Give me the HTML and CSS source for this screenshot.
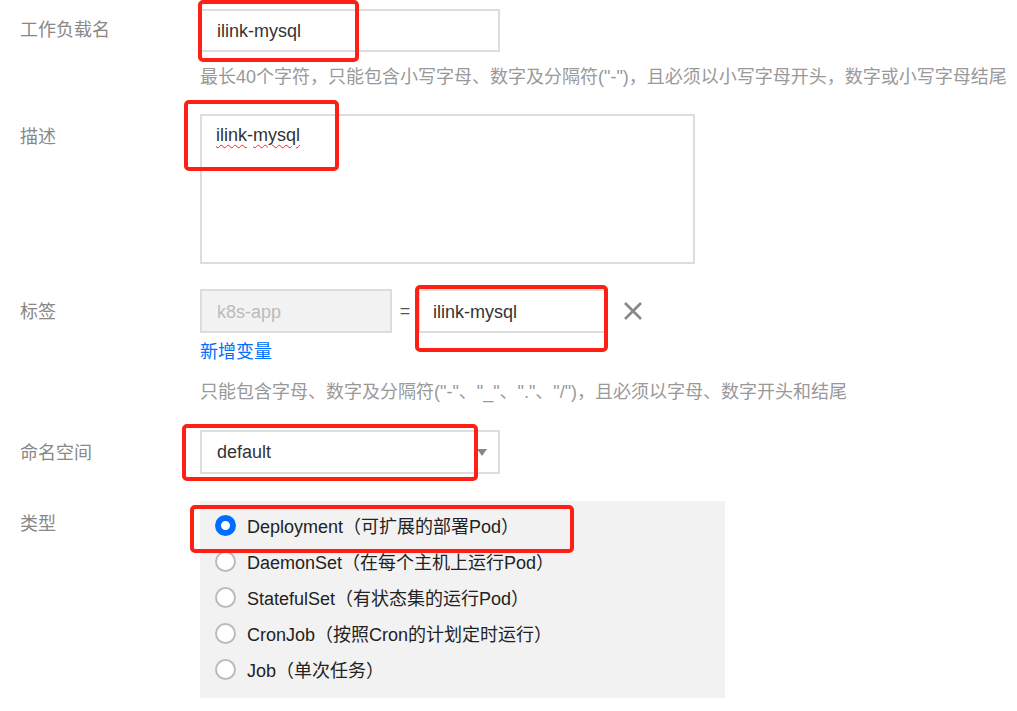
FILE: index.html
```html
<!DOCTYPE html>
<html lang="zh-CN">

<head>
    <meta charset="UTF-8">
    <meta name="viewport" content="width=device-width, initial-scale=1.0">
    <title>创建工作负载</title>
    <link rel="stylesheet" href="styles.css">
</head>

<body>
    <div class="form">
        <div class="form-row">
            <label class="form-label">工作负载名</label>
            <div class="form-field">
                <div class="text-input name-input">ilink-mysql</div>
                <p class="hint hint-name">最长40个字符，只能包含小写字母、数字及分隔符("-")，且必须以小写字母开头，数字或小写字母结尾</p>
            </div>
        </div>

        <div class="form-row">
            <label class="form-label">描述</label>
            <div class="form-field">
                <div class="text-area"><span class="typo">ilink</span>-<span class="typo">mysql</span></div>
            </div>
        </div>

        <div class="form-row">
            <label class="form-label">标签</label>
            <div class="form-field">
                <div class="label-pair">
                    <div class="text-input key-input">k8s-app</div>
                    <span class="equals">=</span>
                    <div class="text-input value-input">ilink-mysql</div>
                    <svg class="remove-icon" width="20" height="20" viewBox="0 0 20 20">
                        <path d="M2 2 L18 18 M18 2 L2 18" stroke="#888" stroke-width="2.6" fill="none" />
                    </svg>
                </div>
                <a class="add-link" href="#">新增变量</a>
                <p class="hint hint-label">只能包含字母、数字及分隔符("-"、"_"、"."、"/")，且必须以字母、数字开头和结尾</p>
            </div>
        </div>

        <div class="form-row">
            <label class="form-label">命名空间</label>
            <div class="form-field">
                <div class="text-input select-input">
                    <span>default</span>
                    <span class="caret"></span>
                </div>
            </div>
        </div>

        <div class="form-row">
            <label class="form-label">类型</label>
            <div class="form-field">
                <div class="radio-panel">
                    <div class="radio-item"><span class="radio checked"></span>Deployment（可扩展的部署Pod）</div>
                    <div class="radio-item"><span class="radio"></span>DaemonSet（在每个主机上运行Pod）</div>
                    <div class="radio-item"><span class="radio"></span>StatefulSet（有状态集的运行Pod）</div>
                    <div class="radio-item"><span class="radio"></span>CronJob（按照Cron的计划定时运行）</div>
                    <div class="radio-item"><span class="radio"></span>Job（单次任务）</div>
                </div>
            </div>
        </div>

        <!-- annotation boxes -->
        <div class="mark mark-name"></div>
        <div class="mark mark-desc"></div>
        <div class="mark mark-label"></div>
        <div class="mark mark-ns"></div>
        <div class="mark mark-type"></div>
    </div>
</body>

</html>
```

FILE: styles.css
```css
body {
    margin: 0;
    background: #fff;
    font-family: "Liberation Sans", "Noto Sans CJK SC", sans-serif;
    font-size: 18px;
    color: #333;
}

.form {
    position: relative;
    padding: 9px 0 0 20px;
    width: 997px;
    height: 702px;
}

.form-row {
    display: flex;
    margin-bottom: 25px;
}

.form-label {
    width: 180px;
    flex-shrink: 0;
    line-height: 43px;
    color: #888;
}

.form-row + .form-row .form-label {
    line-height: 46px;
}

.form-field {
    display: flex;
    flex-direction: column;
    align-items: flex-start;
}

.text-input {
    box-sizing: border-box;
    height: 44px;
    border: 2px solid #ddd;
    background: #fff;
    padding: 0 15px;
    line-height: 42px;
    color: #333;
}

.name-input {
    width: 300px;
    height: 43px;
    line-height: 40px;
}

.hint {
    margin: 0;
    color: #999;
    line-height: 26px;
    white-space: nowrap;
}

.hint-name {
    margin-top: 12px;
    margin-bottom: -1px;
}

.text-area {
    box-sizing: border-box;
    width: 495px;
    height: 150px;
    border: 2px solid #ddd;
    padding: 6px 14px;
    line-height: 26px;
}

.typo {
    text-decoration: underline wavy #f22;
    text-decoration-thickness: 1px;
    text-underline-offset: 3px;
}

.label-pair {
    display: flex;
    align-items: center;
}

.key-input {
    width: 192px;
    background: #f2f2f2;
    color: #bbb;
}

.equals {
    width: 26px;
    text-align: center;
    color: #555;
}

.value-input {
    width: 186px;
    border-right: none;
    padding-left: 13px;
}

.remove-icon {
    margin-left: 19px;
}

.add-link {
    margin-top: 7px;
    color: #006eff;
    text-decoration: none;
    line-height: 24px;
}

.hint-label {
    margin-top: 15px;
}

.select-input {
    width: 300px;
    display: flex;
    justify-content: space-between;
    align-items: center;
}

.caret {
    width: 0;
    height: 0;
    border-left: 5px solid transparent;
    border-right: 5px solid transparent;
    border-top: 7px solid #888;
    margin-right: -4px;
}

.radio-panel {
    box-sizing: border-box;
    width: 525px;
    height: 197px;
    background: #f2f2f2;
    padding: 6px 15px 0;
}

.radio-item {
    display: flex;
    align-items: center;
    height: 36px;
    color: #222;
}

.radio {
    box-sizing: border-box;
    width: 21px;
    height: 21px;
    border-radius: 50%;
    border: 2px solid #bbb;
    background: #fff;
    margin-right: 11px;
    flex-shrink: 0;
}

.radio.checked {
    border: 6px solid #006eff;
}

.mark {
    position: absolute;
    box-sizing: border-box;
    border: 4px solid #ff1f14;
    border-radius: 5px;
}

.mark-name {
    left: 198px;
    top: 0;
    width: 161px;
    height: 62px;
}

.mark-desc {
    left: 184px;
    top: 100px;
    width: 155px;
    height: 71px;
}

.mark-label {
    left: 415px;
    top: 285px;
    width: 193px;
    height: 67px;
}

.mark-ns {
    left: 182px;
    top: 424px;
    width: 296px;
    height: 57px;
}

.mark-type {
    left: 190px;
    top: 505px;
    width: 384px;
    height: 48px;
}
```
